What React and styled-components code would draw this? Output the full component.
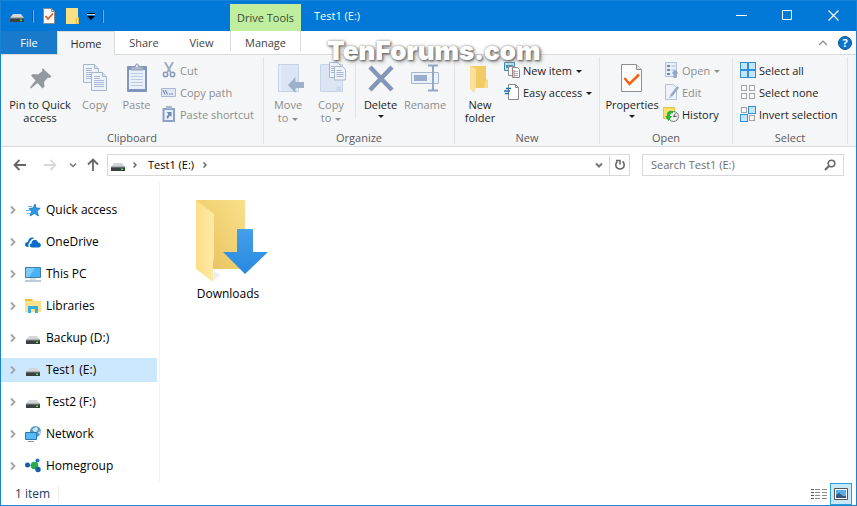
import styled, { createGlobalStyle } from 'styled-components'


const GlobalStyle = createGlobalStyle`
  * {
    box-sizing: border-box;
  }

  body {
    margin: 0;
    font-family: 'Open Sans', 'Noto Sans', sans-serif;
    font-size: 11px;
    color: #000;
  }

  button,
  input {
    font: inherit;
    color: inherit;
    border: 0;
    padding: 0;
    margin: 0;
    background: none;
  }

  svg {
    display: block;
    flex: none;
  }
`;

const Window = styled.div`
  position: relative;
  display: flex;
  flex-direction: column;
  min-height: 100vh;
  background: #fff;
  border: 1px solid #1883d7;
`;

/* title bar */

const TitleBar = styled.header`
  display: flex;
  height: 30px;
  background: #0078d7;
  color: #fff;
`;

const QuickBar = styled.div`
  display: flex;
  align-items: center;
  gap: 7px;
  width: 229px;
  padding-left: 8px;
`;

const QuickButton = styled.button`
  display: flex;
  justify-content: center;
  width: ${({ $narrow }) => ($narrow ? '8px' : '16px')};
`;

const QuickDivider = styled.span`
  width: 2px;
  height: 13px;
  border-left: 1px solid #0a5fb4;
  border-right: 1px solid #5fb0f5;
`;

const ToolsTab = styled.div`
  width: 71px;
  height: 27px;
  margin-top: 3px;
  background: #bfee9f;
  color: #3b4a33;
  line-height: 28px;
  text-align: center;
`;

const Title = styled.h1`
  flex: 1;
  margin: 0;
  padding-left: 13px;
  font-size: 11px;
  font-weight: 400;
  line-height: 30px;
`;

const WindowButton = styled.button`
  display: flex;
  align-items: center;
  justify-content: center;
  width: 46px;
  height: 28px;
`;

/* tabs */

const TabBar = styled.div`
  display: flex;
  align-items: stretch;
  height: 24px;
  border-bottom: 1px solid #dadbdc;
`;

const Tab = styled.button`
  width: ${({ $width }) => $width}px;
  height: 24px;
  line-height: 24px;
  color: #444;

  ${({ $kind }) => $kind === 'file' && `
    height: 23px;
    background: #1979ca;
    color: #fff;
  `}

  ${({ $kind }) => $kind === 'active' && `
    background: #f5f6f7;
    border: 1px solid #dadbdc;
    border-bottom: 0;
    line-height: 22px;
    color: #2b2b2b;
  `}

  ${({ $kind }) => $kind === 'tools' && `
    height: 20px;
    border: solid #dadbdc;
    border-width: 0 1px;
  `}
`;

const TabBarEnd = styled.div`
  display: flex;
  align-items: center;
  gap: 10px;
  margin-left: auto;
  padding-right: 4px;
`;

/* ribbon */

const Ribbon = styled.div`
  display: flex;
  height: 92px;
  background: #f5f6f7;
  border-bottom: 1px solid #dadbdc;
`;

const Group = styled.section`
  display: flex;
  flex-direction: column;
  width: ${({ $width }) => $width}px;
  height: 87px;
  margin-top: 2px;
  border-right: 1px solid #e2e3e4;
`;

const GroupBody = styled.div`
  display: flex;
  height: 74px;
  padding: 0 3px;
`;

const GroupName = styled.h2`
  margin: 0;
  font-size: 11px;
  font-weight: 400;
  line-height: 13px;
  text-align: center;
  color: #5a5a5a;
`;

const BigButton = styled.button`
  display: flex;
  flex-direction: column;
  align-items: center;
  flex: none;
  gap: 4px;
  width: ${({ $width }) => $width}px;
  padding-top: 5px;
  line-height: 13px;
  white-space: pre;
  color: ${({ disabled }) => (disabled ? '#8d8d8d' : '#1e1e1e')};
`;

const SmallColumn = styled.div`
  display: flex;
  flex-direction: column;
  padding-top: 2px;
  padding-left: 2px;

  &:first-child {
    padding-left: 4px;
  }
`;

const SmallButton = styled.button`
  display: flex;
  align-items: center;
  gap: 3px;
  height: 22px;
  white-space: nowrap;
  color: ${({ disabled }) => (disabled ? '#8d8d8d' : '#1e1e1e')};
`;

const Divider = styled.span`
  width: 1px;
  height: 55px;
  margin: 7px 2px 0;
  background: #e2e3e4;
`;

const Arrow = styled.span`
  display: inline-block;
  width: 0;
  vertical-align: middle;
  margin-left: 4px;
  border: 3px solid transparent;
  border-top-color: currentColor;
  border-bottom: 0;
`;

const ArrowBelow = styled(Arrow)`
  display: block;
  margin: 4px auto 0;
`;

/* address bar */

const AddressRow = styled.div`
  display: flex;
  align-items: center;
  height: 35px;
  padding: 0 12px 0 7px;
`;

const NavButtons = styled.div`
  display: flex;
  align-items: center;
`;

const NavButton = styled.button`
  display: flex;
  justify-content: center;
  width: ${({ $width }) => $width}px;
`;

const AddressBox = styled.div`
  display: flex;
  align-items: center;
  flex: 1;
  height: 22px;
  padding-left: 2px;
  border: 1px solid #d9d9d9;
`;

const CrumbStart = styled.span`
  display: flex;
  align-items: center;
  gap: 5px;
`;

const Crumb = styled.a`
  padding: 0 7px 0 9px;
  line-height: 20px;
  color: #000;
  text-decoration: none;
`;

const BoxButton = styled.button`
  display: flex;
  align-items: center;
  justify-content: center;
  width: 20px;
  height: 20px;
  ${({ $split }) => $split && 'border-left: 1px solid #d9d9d9;'}
  ${({ $push }) => $push && 'margin-left: auto;'}
`;

const SearchBox = styled.label`
  display: flex;
  align-items: center;
  width: 202px;
  height: 22px;
  margin-left: 12px;
  padding: 0 7px 0 8px;
  border: 1px solid #d9d9d9;
`;

const SearchInput = styled.input`
  flex: 1;
  min-width: 0;
  height: 20px;
  outline: none;

  &::placeholder {
    color: #6d6d6d;
    opacity: 1;
  }
`;

/* content */

const Main = styled.div`
  display: flex;
  flex: 1;
  font-size: 12px;
`;

const Sidebar = styled.nav`
  display: flex;
  flex-direction: column;
  gap: 8px;
  width: 159px;
  padding: 16px 2px 4px 0;
  border-right: 1px solid #f2f2f2;
`;

const TreeItem = styled.a`
  display: flex;
  align-items: center;
  height: 24px;
  padding-left: 8px;
  line-height: 16px;
  color: #000;
  text-decoration: none;
  background: ${({ $selected }) => ($selected ? '#cce8ff' : 'transparent')};
`;

const TreeIcon = styled.span`
  margin: 0 5px 0 8px;
`;

const Files = styled.main`
  flex: 1;
  padding: 16px 28px;
`;

const FileTile = styled.a`
  display: flex;
  flex-direction: column;
  align-items: center;
  gap: 4px;
  width: 80px;
  line-height: 16px;
  color: #000;
  text-decoration: none;
`;

const StatusBar = styled.footer`
  display: flex;
  align-items: center;
  height: 23px;
  padding: 0 4px 0 14px;
  font-size: 12px;
  color: #1e395b;
`;

const ItemCount = styled.span`
  width: 44px;
  line-height: 16px;
  border-right: 1px solid #ececec;
`;

const ViewButton = styled.button`
  display: flex;
  align-items: center;
  justify-content: center;
  width: 22px;
  height: 22px;
  border: 1px solid ${({ $active }) => ($active ? '#26a0da' : 'transparent')};
  background: ${({ $active }) => ($active ? '#cbe8f6' : 'transparent')};
`;

const ViewButtons = styled.div`
  display: flex;
  margin-left: auto;
`;

const Watermark = styled.div`
  position: absolute;
  top: 35px;
  left: 326px;
  font-family: Inter, 'Liberation Sans', sans-serif;
  font-size: 26px;
  font-weight: 900;
  line-height: 30px;
  color: #fff;
  text-shadow: 1px 1px 2px #666, 0 0 3px #999, 2px 2px 4px #aaa;
  pointer-events: none;
`;

/* icons */

const Icon = ({ size = 16, width, height, children }) => (
  <svg
    width={width || size}
    height={height || size}
    viewBox={`0 0 ${width || size} ${height || size}`}
    fill="none"
    aria-hidden="true"
  >
    {children}
  </svg>
)

const DriveIcon = () => (
  <Icon>
    <path d="M4 6h8l3 4H1z" fill="#d3d5d7" />
    <path d="M1 10h14v4H1z" fill="#3c4043" />
    <path d="M1 10h14" stroke="#8a8d90" />
    <path d="M11 11.500h2v1.500h-2z" fill="#3ee63e" />
  </Icon>
)

const SheetCheckIcon = () => (
  <Icon>
    <path d="M2.500.5h8l3 3v12h-11z" fill="#fafafa" stroke="#8b8b8b" />
    <path d="M10.500.5v3h3" stroke="#8b8b8b" />
    <path d="M4.500 8l2.500 3 5-5.500" stroke="#e8581c" strokeWidth="1.800" />
  </Icon>
)

const SmallFolderIcon = () => (
  <Icon>
    <path d="M2 0h12v10l1 1v5H2z" fill="#fbdf83" />
    <path d="M12.500 15.500v-5l2-1v6z" fill="#fbe49a" stroke="#e3bd4f" />
  </Icon>
)

const QuickMenuIcon = () => (
  <Icon width={8} height={8}>
    <path d="M0 1.500h8" stroke="#000" />
    <path d="M0 2.500h8" stroke="#b5dbf8" />
    <path d="M0 4h8L4 8z" fill="#000" />
  </Icon>
)

const PinIcon = () => (
  <Icon size={32}>
    <path
      d="M18.500 6l9 8.500-2 1.500-1.500-.5-4 4.500.5 4.500-2 2-5-5.500L7 26.500l-1-1 5.500-7L7 13.500l2-1.500 5 .500 4.500-3.500-.5-1.500z"
      fill="#929a9f"
    />
  </Icon>
)

const PageShape = ({ x, y, lines = 6 }) => (
  <g transform={`translate(${x} ${y})`}>
    <path d="M.5.5h11l4 4v14H.500z" fill="#edf2fb" stroke="#a6b6cf" />
    <path d="M11.500.5v4h4" fill="#d6e0f0" stroke="#a6b6cf" />
    {Array.from({ length: lines }, (_, i) => (
      <path key={i} d={`M3 ${4.5 + i * 2}h${i < 2 ? 6 : 10}`} stroke="#a9badb" />
    ))}
  </g>
)

const CopyIcon = () => (
  <Icon size={32}>
    <PageShape x={4} y={2} />
    <PageShape x={12} y={10} />
  </Icon>
)

const PasteIcon = () => (
  <Icon size={32}>
    <rect x="6" y="4" width="20" height="26" rx="1" fill="#7f95bd" />
    <path d="M8 8h16v19H8z" fill="#e9f0fa" />
    <path d="M10 11.500h12M10 14.500h12M10 17.500h12M10 20.500h12M10 23.500h12" stroke="#bccbe3" />
    <path d="M10 8V5h4c0-4 4-4 4 0h4v3z" fill="#aeb9c9" stroke="#91a0b6" />
    <circle cx="16" cy="4" r="1" fill="#eef2f8" />
  </Icon>
)

const CutIcon = () => (
  <Icon>
    <path d="M4 0l5.500 10M12 0L6.500 10" stroke="#9eacc4" strokeWidth="2" />
    <circle cx="4.500" cy="12.500" r="2.200" stroke="#8799bb" strokeWidth="1.500" />
    <circle cx="11.500" cy="12.500" r="2.200" stroke="#8799bb" strokeWidth="1.500" />
  </Icon>
)

const CopyPathIcon = () => (
  <Icon>
    <path d="M.5 4.500h14v8H.500z" fill="#dfe8f6" stroke="#a9b9d4" />
    <path d="M2 6l2 4.500M4.500 6l2 4.500M8 10h1.500M10.500 10H12" stroke="#5f749e" />
  </Icon>
)

const PasteShortcutIcon = () => (
  <Icon>
    <path d="M1.500 2H14v14H1.500z" fill="#8ea2c6" />
    <path d="M3.500 4H12v10H3.500z" fill="#e9f0fa" />
    <path d="M5 0h6v3H5z" fill="#a8b6cc" />
    <path d="M5.500 6h5v5L9 9.500 6.500 13l-1-2 2-3z" fill="#6f86b3" />
  </Icon>
)

const MoveToIcon = () => (
  <Icon size={32}>
    <path d="M6.500 2.500h20v27h-20z" fill="#dbe5f3" stroke="#c6d4e8" />
    <path d="M7 3v26h2V3z" fill="#e8eef8" />
    <path d="M16 23l7.500-8v5H32v6h-8.500v5z" fill="#9fb0cb" />
  </Icon>
)

const CopyToIcon = () => (
  <Icon size={32}>
    <path d="M5.500 2.500h22v27h-22z" fill="#dbe5f3" stroke="#c6d4e8" />
    <g transform="translate(14)">
      <path d="M.5.500h8l3 3v12H.500z" fill="#eff4fb" stroke="#a8b8d2" />
      <path d="M5.500 4.500h8l3 3v10.500h-11z" fill="#eff4fb" stroke="#a8b8d2" />
      <path d="M2 4.500h3M2 6.500h3M2 8.500h3M2 10.500h3M7.500 8.500h5M7.500 10.500h7M7.500 12.500h7M7.500 14.500h7" stroke="#a4b5d2" />
    </g>
    <path d="M22 24l4 1v5h-5z" fill="#cbd8ea" />
  </Icon>
)

const DeleteIcon = () => (
  <Icon size={32}>
    <path d="M5 5l22 23M27 5L5 28" stroke="#8497b8" strokeWidth="4.500" />
  </Icon>
)

const RenameIcon = () => (
  <Icon size={32}>
    <path d="M2.500 10.500h27v11h-27z" fill="#e9f1fb" stroke="#a5b6d1" />
    <path d="M5 13h13v6H5z" fill="#9aaccb" />
    <path d="M19 3.500h4l1 1 1-1h4M24 4v24M19 28.500h4l1-1 1 1h4" stroke="#94a6c5" strokeWidth="2" />
  </Icon>
)

const NewFolderIcon = () => (
  <Icon size={32}>
    <path d="M6 4h16v13l2 2v7H6z" fill="#f2cb67" />
    <path d="M21 19l3-1v8h-4z" fill="#f7d987" />
    <path d="M6 4l6 3v17l-2 7-4-4z" fill="#fbe09a" />
  </Icon>
)

const NewItemIcon = () => (
  <Icon>
    <path d="M.5.500h10v8H.500z" fill="#bfe2f5" stroke="#3d86ad" />
    <path d="M2 3h7v3H2z" fill="#4993ba" />
    <path d="M4.500 4.500h6l2 2v7h-8z" fill="#f4f4f4" stroke="#8c8c8c" />
    <path d="M8.500 5.500h5l2 2v8h-7z" fill="#fff" stroke="#8c8c8c" />
    <path d="M10 9.500h4M10 11.500h4M10 13.500h4" stroke="#a7b9d8" />
    <path d="M10 8v7" stroke="#e06a50" />
  </Icon>
)

const EasyAccessIcon = () => (
  <Icon>
    <path d="M4.500.5h7l3 3v12h-10z" fill="#fdfdfd" stroke="#8b8b8b" />
    <path d="M11.500.5v3h3" stroke="#8b8b8b" />
    <path d="M2 4.500h5M0 7h6M1 9.500h4" stroke="#1f6fb2" strokeWidth="1.500" />
  </Icon>
)

const PropertiesIcon = () => (
  <Icon size={32}>
    <path d="M5.500 2.500h15l5 5v22h-20z" fill="#fbfbfb" stroke="#8f8f8f" />
    <path d="M20.500 2.500v5h5" fill="#e6e6e6" stroke="#8f8f8f" />
    <path d="M8.500 16l5 6L23 12.500" stroke="#f4620f" strokeWidth="2.500" />
  </Icon>
)

const OpenIcon = () => (
  <Icon>
    <path d="M2.500.5h11v14h-11z" fill="#e7eef9" stroke="#b3c1d9" />
    <path d="M4 3h3v2H4zM4 7h3v2H4zM4 11h3v2H4z" fill="#7187b2" />
    <path d="M8.500 4h4M8.500 8h3" stroke="#a9b9d4" />
    <path d="M12 7.500l3.500 4h-2V16h-3v-4.500h-2z" fill="#90a3c6" />
  </Icon>
)

const EditIcon = () => (
  <Icon>
    <path d="M2.500.5h8l3 3v12h-11z" fill="#edf2fb" stroke="#b3c1d9" />
    <path d="M15 3L8 12" stroke="#93a6c9" strokeWidth="2.500" />
    <path d="M7 11l2 2-3 1.500z" fill="#b8c6dd" />
  </Icon>
)

const HistoryIcon = () => (
  <Icon>
    <path d="M0 1h9l3 1v11H0z" fill="#fbdf73" />
    <path d="M.5 1.500h11v11H.500z" stroke="#e5c24d" />
    <circle cx="10.500" cy="10.500" r="5" fill="#eeeeee" stroke="#777" />
    <path d="M10.500 10.500l2-3M10.500 10.500h3" stroke="#555" />
    <path d="M10 5C5 4 3.500 7 4 10H2l3.500 5L9 10H7c0-2 1-3 3-3z" fill="#25b53a" />
  </Icon>
)

const Tiles = ({ on }) => (
  <Icon>
    {[[0, 0], [8, 0], [0, 8], [8, 8]].map(([x, y], i) => (
      <rect
        key={i}
        x={x + (on[i] ? 0.5 : 1.5)}
        y={y + (on[i] ? 0.5 : 1.5)}
        width={on[i] ? 7 : 5}
        height={on[i] ? 7 : 5}
        fill={on[i] ? '#c5e5fb' : '#fafafa'}
        stroke={on[i] ? '#2f8fdb' : '#a3a3a3'}
      />
    ))}
  </Icon>
)

const TreeChevron = () => (
  <Icon width={8} height={10}>
    <path d="M2 1.500L5.500 5 2 8.500" stroke="#a3a3a3" strokeWidth="1.800" />
  </Icon>
)

const CrumbChevron = () => (
  <Icon width={8} height={8}>
    <path d="M2.500 1.500L5 4 2.500 6.500" stroke="#6a6a6a" strokeWidth="1.500" />
  </Icon>
)

const ChevronDown = ({ width = 1.5 }) => (
  <Icon width={10} height={8}>
    <path d="M2 2.500l3 3 3-3" stroke="#777" strokeWidth={width} />
  </Icon>
)

const StarIcon = () => (
  <Icon>
    <path d="M10 2l1.200 4 4 .3-3.200 2.900 1.500 4.800L9.500 11.500 5 14l1.500-4.700L4 6.500l4-.5z" fill="#2b98e4" stroke="#1b78c4" strokeWidth=".8" />
    <path d="M3 4.500h4M1 8.500h4M2 11.500h3" stroke="#5fb4ef" />
  </Icon>
)

const CloudIcon = () => (
  <Icon>
    <path d="M4 13H3c-4 0-4-5 0-5 0-4 4-6 7-3.500C7 4.500 5 7 5 9c-2 .5-2 3-1 4z" fill="#0a6cc8" />
    <path d="M7 13.500c-3 0-3-4-.5-4C6.500 5 12 4.500 13 8.500c3.500 0 4 5 .5 5z" fill="#0a6cc8" />
    <path d="M4.500 10C5 6 8 4.500 11 5" stroke="#fff" />
  </Icon>
)

const PcIcon = () => (
  <Icon>
    <path d="M.5 1.500h15v10H.500z" fill="#48b4f5" stroke="#3a81ad" />
    <path d="M1 2h9L4 11H1z" fill="#7ccbfa" />
    <path d="M5 13h6" stroke="#b5c4cc" />
    <path d="M0 15h16" stroke="#7d97a8" />
  </Icon>
)

const LibrariesIcon = () => (
  <Icon>
    <path d="M0 1h7l1 2h8v11H0z" fill="#fde18a" />
    <path d="M0 1h7l1 2H0z" fill="#f2bd2b" />
    <path d="M3 15V8h10v7h-3v-4H6v4z" fill="#35aee6" />
  </Icon>
)

const NetworkIcon = () => (
  <Icon>
    <circle cx="10.500" cy="5.500" r="5.500" fill="#5c9cc5" />
    <path d="M7 3c2 0 3-2 5-2l1 3-3 3zM13 6l3-1-1 4z" fill="#cfe5f2" />
    <path d="M.5 6.500h11v7H.500z" fill="#55bbf6" stroke="#2a78ac" />
    <path d="M3 15.500h6" stroke="#7f97a6" />
  </Icon>
)

const HomegroupIcon = () => (
  <Icon>
    <path d="M3 7l7 1 2-5M10 8l4 4" stroke="#8ab0bd" />
    <circle cx="9.500" cy="7.500" r="3.800" fill="#27ab4b" />
    <circle cx="2.500" cy="7" r="2.500" fill="#1360a8" />
    <circle cx="12.500" cy="2.500" r="2" fill="#1d75bf" />
    <circle cx="13" cy="11.500" r="2.700" fill="#1360a8" />
  </Icon>
)

const DownloadsIcon = () => (
  <svg width="80" height="84" viewBox="0 0 80 84" aria-hidden="true">
    <defs>
      <linearGradient id="back" x1="0" x2="1" y1="1" y2="0">
        <stop offset="0" stopColor="#e6c05b" />
        <stop offset="1" stopColor="#fae08a" />
      </linearGradient>
      <linearGradient id="flap" x1="0" x2="1">
        <stop offset="0" stopColor="#fbdf86" />
        <stop offset="1" stopColor="#ffe9a4" />
      </linearGradient>
      <linearGradient id="arrow" x1="0" x2="0" y1="0" y2="1">
        <stop offset="0" stopColor="#45a0ea" />
        <stop offset="1" stopColor="#2788df" />
      </linearGradient>
    </defs>
    <path d="M25 83l8-6-7-4z" fill="#eeeeee" />
    <path d="M8 2h49v69H8z" fill="url(#back)" />
    <path d="M8 2l18 14v44l-1 4v20L8 71z" fill="url(#flap)" />
    <path d="M49 31h16v23h15L57 76 35 54h14z" fill="url(#arrow)" />
  </svg>
)

const treeItems = [
  { name: 'Quick access', icon: <StarIcon /> },
  { name: 'OneDrive', icon: <CloudIcon /> },
  { name: 'This PC', icon: <PcIcon /> },
  { name: 'Libraries', icon: <LibrariesIcon /> },
  { name: 'Backup (D:)', icon: <DriveIcon /> },
  { name: 'Test1 (E:)', icon: <DriveIcon />, selected: true },
  { name: 'Test2 (F:)', icon: <DriveIcon /> },
  { name: 'Network', icon: <NetworkIcon /> },
  { name: 'Homegroup', icon: <HomegroupIcon /> },
]

const App = () => {
  return (
    <Window>
      <GlobalStyle />
      <TitleBar>
        <QuickBar>
          <QuickButton aria-label="Drive"><DriveIcon /></QuickButton>
          <QuickDivider />
          <QuickButton aria-label="Properties"><SheetCheckIcon /></QuickButton>
          <QuickButton aria-label="New folder"><SmallFolderIcon /></QuickButton>
          <QuickButton $narrow aria-label="Customize toolbar"><QuickMenuIcon /></QuickButton>
          <QuickDivider />
        </QuickBar>
        <ToolsTab>Drive Tools</ToolsTab>
        <Title>Test1 (E:)</Title>
        <WindowButton aria-label="Minimize">
          <Icon width={11} height={11}><path d="M0 5.500h11" stroke="#fff" /></Icon>
        </WindowButton>
        <WindowButton aria-label="Maximize">
          <Icon width={10} height={10}><path d="M.5.500h9v9h-9z" stroke="#fff" /></Icon>
        </WindowButton>
        <WindowButton aria-label="Close">
          <Icon width={11} height={11}><path d="M.5.500l10 10M10.500.5l-10 10" stroke="#fff" strokeWidth="1.200" /></Icon>
        </WindowButton>
      </TitleBar>

      <TabBar>
        <Tab $width={56} $kind="file">File</Tab>
        <Tab $width={58} $kind="active">Home</Tab>
        <Tab $width={58}>Share</Tab>
        <Tab $width={57}>View</Tab>
        <Tab $width={71} $kind="tools">Manage</Tab>
        <TabBarEnd>
          <button aria-label="Collapse ribbon">
            <Icon width={10} height={8}><path d="M1 6l4-4 4 4" stroke="#8c8c8c" strokeWidth="1.200" /></Icon>
          </button>
          <button aria-label="Help">
            <svg width="14" height="14" viewBox="0 0 14 14">
              <circle cx="7" cy="7" r="6.500" fill="#0b74cf" stroke="#14508c" />
              <text x="7" y="11" textAnchor="middle" fontSize="11" fontWeight="700" fill="#fff">?</text>
            </svg>
          </button>
        </TabBarEnd>
      </TabBar>

      <Ribbon>
        <Group $width={263}>
          <GroupBody>
            <BigButton $width={72}><PinIcon /><span>{'Pin to Quick\naccess'}</span></BigButton>
            <BigButton $width={38} disabled><CopyIcon /><span>Copy</span></BigButton>
            <BigButton $width={45} disabled><PasteIcon /><span>Paste</span></BigButton>
            <SmallColumn>
              <SmallButton disabled><CutIcon />Cut</SmallButton>
              <SmallButton disabled><CopyPathIcon />Copy path</SmallButton>
              <SmallButton disabled><PasteShortcutIcon />Paste shortcut</SmallButton>
            </SmallColumn>
          </GroupBody>
          <GroupName>Clipboard</GroupName>
        </Group>

        <Group $width={191}>
          <GroupBody>
            <BigButton $width={42} disabled><MoveToIcon /><span>{'Move\nto'}<Arrow /></span></BigButton>
            <BigButton $width={44} disabled><CopyToIcon /><span>{'Copy\nto'}<Arrow /></span></BigButton>
            <Divider />
            <BigButton $width={45}><DeleteIcon /><span>Delete<ArrowBelow /></span></BigButton>
            <BigButton $width={44} disabled><RenameIcon /><span>Rename</span></BigButton>
          </GroupBody>
          <GroupName>Organize</GroupName>
        </Group>

        <Group $width={145}>
          <GroupBody>
            <BigButton $width={44}><NewFolderIcon /><span>{'New\nfolder'}</span></BigButton>
            <SmallColumn>
              <SmallButton><NewItemIcon /><span>New item<Arrow /></span></SmallButton>
              <SmallButton><EasyAccessIcon /><span>Easy access<Arrow /></span></SmallButton>
            </SmallColumn>
          </GroupBody>
          <GroupName>New</GroupName>
        </Group>

        <Group $width={133}>
          <GroupBody>
            <BigButton $width={58}><PropertiesIcon /><span>Properties<ArrowBelow /></span></BigButton>
            <SmallColumn>
              <SmallButton disabled><OpenIcon /><span>Open<Arrow /></span></SmallButton>
              <SmallButton disabled><EditIcon />Edit</SmallButton>
              <SmallButton><HistoryIcon />History</SmallButton>
            </SmallColumn>
          </GroupBody>
          <GroupName>Open</GroupName>
        </Group>

        <Group $width={115}>
          <GroupBody>
            <SmallColumn>
              <SmallButton><Tiles on={[1, 1, 1, 1]} />Select all</SmallButton>
              <SmallButton><Tiles on={[0, 0, 0, 0]} />Select none</SmallButton>
              <SmallButton><Tiles on={[0, 1, 1, 0]} />Invert selection</SmallButton>
            </SmallColumn>
          </GroupBody>
          <GroupName>Select</GroupName>
        </Group>
      </Ribbon>

      <AddressRow>
        <NavButtons>
          <NavButton $width={24} aria-label="Back">
            <Icon width={14} height={12}><path d="M13 6H2M6.500 1L1.500 6l5 5" stroke="#666" strokeWidth="1.800" /></Icon>
          </NavButton>
          <NavButton $width={36} aria-label="Forward" disabled>
            <Icon width={14} height={12}><path d="M1 6h11M7.500 1l5 5-5 5" stroke="#d8d8d8" strokeWidth="1.800" /></Icon>
          </NavButton>
          <NavButton $width={10} aria-label="Recent locations"><ChevronDown /></NavButton>
          <NavButton $width={29} aria-label="Up">
            <Icon width={12} height={14}><path d="M6 13V2M1 6.500l5-5 5 5" stroke="#666" strokeWidth="1.800" /></Icon>
          </NavButton>
        </NavButtons>
        <AddressBox>
          <CrumbStart>
            <DriveIcon />
            <CrumbChevron />
          </CrumbStart>
          <Crumb href="#e">Test1 (E:)</Crumb>
          <CrumbChevron />
          <BoxButton $push aria-label="Previous locations"><ChevronDown width={2} /></BoxButton>
          <BoxButton $split aria-label="Refresh">
            <Icon width={12} height={12}>
              <path d="M8.500 2.500a4.200 4.200 0 1 1-5 0" stroke="#666" strokeWidth="1.600" />
              <path d="M2 1.500h4v4" stroke="#666" strokeWidth="1.500" />
            </Icon>
          </BoxButton>
        </AddressBox>
        <SearchBox>
          <SearchInput type="search" aria-label="Search Test1 (E:)" placeholder="Search Test1 (E:)" />
          <Icon width={12} height={12}>
            <circle cx="7.500" cy="4.500" r="3.300" stroke="#666" strokeWidth="1.600" />
            <path d="M5 7l-4 4" stroke="#666" strokeWidth="2" />
          </Icon>
        </SearchBox>
      </AddressRow>

      <Main>
        <Sidebar>
          {
            treeItems.map((item) => (
              <TreeItem key={item.name} href="#" $selected={item.selected}>
                <TreeChevron />
                <TreeIcon>{item.icon}</TreeIcon>
                {item.name}
              </TreeItem>
            ))
          }
        </Sidebar>
        <Files>
          <FileTile href="#downloads">
            <DownloadsIcon />
            Downloads
          </FileTile>
        </Files>
      </Main>

      <StatusBar>
        <ItemCount>1 item</ItemCount>
        <ViewButtons>
          <ViewButton aria-label="Details view">
            <Icon width={16} height={12}>
              <path d="M0 1.500h3M0 4.500h3M0 7.500h3M0 10.500h3" stroke="#555" />
              <path d="M4 1.500h5M4 4.500h5M4 7.500h5M4 10.500h5M11 1.500h5M11 4.500h5M11 7.500h5M11 10.500h5" stroke="#8a8a8a" />
            </Icon>
          </ViewButton>
          <ViewButton $active aria-label="Large icons view">
            <Icon width={14} height={12}>
              <path d="M.5.500h13v11H.500z" fill="#fff" stroke="#555" />
              <path d="M2 2h10v6H2z" fill="#5aaee6" />
              <path d="M2 10V7l3-2 4 3h3v2z" fill="#35587c" />
            </Icon>
          </ViewButton>
        </ViewButtons>
      </StatusBar>

      <Watermark>TenForums.com</Watermark>
    </Window>
  )
}

export default App;
